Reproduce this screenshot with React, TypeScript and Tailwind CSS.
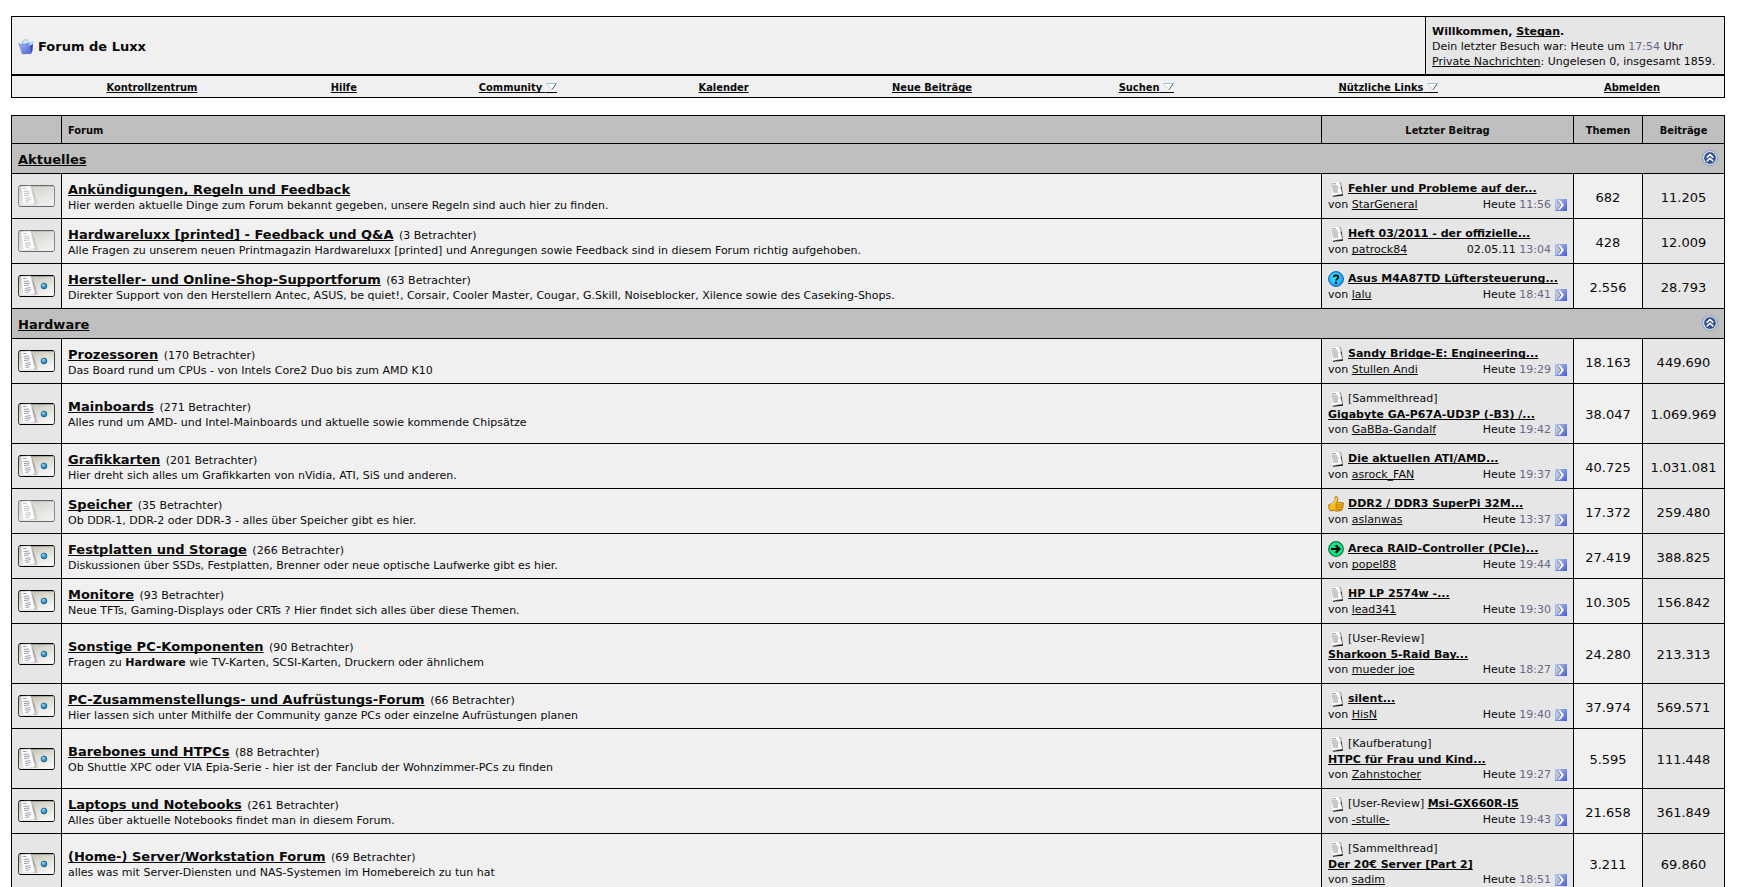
import React from "react";

type IconKind = "page" | "question" | "thumb" | "arrow";
type Forum = {
  title: string;
  viewers?: number;
  desc: React.ReactNode;
  isNew: boolean;
  icon: IconKind;
  prefix?: string;
  prefixInline?: boolean;
  post: string;
  user: string;
  day: string;
  time: string;
  threads: string;
  posts: string;
};
type Category = { name: string; forums: Forum[] };

const categories: Category[] = [
  {
    name: "Aktuelles",
    forums: [
      { title: "Ankündigungen, Regeln und Feedback", desc: "Hier werden aktuelle Dinge zum Forum bekannt gegeben, unsere Regeln sind auch hier zu finden.", isNew: false, icon: "page", post: "Fehler und Probleme auf der...", user: "StarGeneral", day: "Heute", time: "11:56", threads: "682", posts: "11.205" },
      { title: "Hardwareluxx [printed] - Feedback und Q&A", viewers: 3, desc: "Alle Fragen zu unserem neuen Printmagazin Hardwareluxx [printed] und Anregungen sowie Feedback sind in diesem Forum richtig aufgehoben.", isNew: false, icon: "page", post: "Heft 03/2011 - der offizielle...", user: "patrock84", day: "02.05.11", time: "13:04", threads: "428", posts: "12.009" },
      { title: "Hersteller- und Online-Shop-Supportforum", viewers: 63, desc: "Direkter Support von den Herstellern Antec, ASUS, be quiet!, Corsair, Cooler Master, Cougar, G.Skill, Noiseblocker, Xilence sowie des Caseking-Shops.", isNew: true, icon: "question", post: "Asus M4A87TD Lüftersteuerung...", user: "lalu", day: "Heute", time: "18:41", threads: "2.556", posts: "28.793" },
    ],
  },
  {
    name: "Hardware",
    forums: [
      { title: "Prozessoren", viewers: 170, desc: "Das Board rund um CPUs - von Intels Core2 Duo bis zum AMD K10", isNew: true, icon: "page", post: "Sandy Bridge-E: Engineering...", user: "Stullen Andi", day: "Heute", time: "19:29", threads: "18.163", posts: "449.690" },
      { title: "Mainboards", viewers: 271, desc: "Alles rund um AMD- und Intel-Mainboards und aktuelle sowie kommende Chipsätze", isNew: true, icon: "page", prefix: "[Sammelthread]", post: "Gigabyte GA-P67A-UD3P (-B3) /...", user: "GaBBa-Gandalf", day: "Heute", time: "19:42", threads: "38.047", posts: "1.069.969" },
      { title: "Grafikkarten", viewers: 201, desc: "Hier dreht sich alles um Grafikkarten von nVidia, ATI, SiS und anderen.", isNew: true, icon: "page", post: "Die aktuellen ATI/AMD...", user: "asrock_FAN", day: "Heute", time: "19:37", threads: "40.725", posts: "1.031.081" },
      { title: "Speicher", viewers: 35, desc: "Ob DDR-1, DDR-2 oder DDR-3 - alles über Speicher gibt es hier.", isNew: false, icon: "thumb", post: "DDR2 / DDR3 SuperPi 32M...", user: "aslanwas", day: "Heute", time: "13:37", threads: "17.372", posts: "259.480" },
      { title: "Festplatten und Storage", viewers: 266, desc: "Diskussionen über SSDs, Festplatten, Brenner oder neue optische Laufwerke gibt es hier.", isNew: true, icon: "arrow", post: "Areca RAID-Controller (PCIe)...", user: "popel88", day: "Heute", time: "19:44", threads: "27.419", posts: "388.825" },
      { title: "Monitore", viewers: 93, desc: "Neue TFTs, Gaming-Displays oder CRTs ? Hier findet sich alles über diese Themen.", isNew: true, icon: "page", post: "HP LP 2574w -...", user: "lead341", day: "Heute", time: "19:30", threads: "10.305", posts: "156.842" },
      { title: "Sonstige PC-Komponenten", viewers: 90, desc: <>Fragen zu <b>Hardware</b> wie TV-Karten, SCSI-Karten, Druckern oder ähnlichem</>, isNew: true, icon: "page", prefix: "[User-Review]", post: "Sharkoon 5-Raid Bay...", user: "mueder joe", day: "Heute", time: "18:27", threads: "24.280", posts: "213.313" },
      { title: "PC-Zusammenstellungs- und Aufrüstungs-Forum", viewers: 66, desc: "Hier lassen sich unter Mithilfe der Community ganze PCs oder einzelne Aufrüstungen planen", isNew: true, icon: "page", post: "silent...", user: "HisN", day: "Heute", time: "19:40", threads: "37.974", posts: "569.571" },
      { title: "Barebones und HTPCs", viewers: 88, desc: "Ob Shuttle XPC oder VIA Epia-Serie - hier ist der Fanclub der Wohnzimmer-PCs zu finden", isNew: true, icon: "page", prefix: "[Kaufberatung]", post: "HTPC für Frau und Kind...", user: "Zahnstocher", day: "Heute", time: "19:27", threads: "5.595", posts: "111.448" },
      { title: "Laptops und Notebooks", viewers: 261, desc: "Alles über aktuelle Notebooks findet man in diesem Forum.", isNew: true, icon: "page", prefix: "[User-Review]", prefixInline: true, post: "Msi-GX660R-I5", user: "-stulle-", day: "Heute", time: "19:43", threads: "21.658", posts: "361.849" },
      { title: "(Home-) Server/Workstation Forum", viewers: 69, desc: "alles was mit Server-Diensten und NAS-Systemen im Homebereich zu tun hat", isNew: true, icon: "page", prefix: "[Sammelthread]", post: "Der 20€ Server [Part 2]", user: "sadim", day: "Heute", time: "18:51", threads: "3.211", posts: "69.860" },
    ],
  },
];

const navItems = [
  { label: "Kontrollzentrum", menu: false, grow: "grow-[280]" },
  { label: "Hilfe", menu: false, grow: "grow-[104]" },
  { label: "Community", menu: true, grow: "grow-[244]" },
  { label: "Kalender", menu: false, grow: "grow-[168]" },
  { label: "Neue Beiträge", menu: false, grow: "grow-[249]" },
  { label: "Suchen", menu: true, grow: "grow-[180]" },
  { label: "Nützliche Links", menu: true, grow: "grow-[304]" },
  { label: "Abmelden", menu: false, grow: "grow-[184]" },
];

function Gradients() {
  return (
    <svg className="absolute size-0" aria-hidden="true">
      <defs>
        <linearGradient id="card" x1="0" y1="0" x2="0.6" y2="1">
          <stop offset="0" stopColor="#b4b1a8" />
          <stop offset="0.5" stopColor="#dcd9d0" />
          <stop offset="1" stopColor="#f6f5f2" />
        </linearGradient>
        <linearGradient id="fold" x1="0" y1="0" x2="1" y2="0">
          <stop offset="0" stopColor="#6f6d68" />
          <stop offset="1" stopColor="#6f6d68" stopOpacity="0" />
        </linearGradient>
        <linearGradient id="go" x1="0" y1="0" x2="1" y2="1">
          <stop offset="0" stopColor="#b4c6ea" />
          <stop offset="1" stopColor="#4a5cd8" />
        </linearGradient>
        <radialGradient id="cyan" cx="0.4" cy="0.4" r="0.7">
          <stop offset="0" stopColor="#35f0ff" />
          <stop offset="1" stopColor="#1590ff" />
        </radialGradient>
        <radialGradient id="dot" cx="0.4" cy="0.35" r="0.7">
          <stop offset="0" stopColor="#6cc4ec" />
          <stop offset="1" stopColor="#1474ac" />
        </radialGradient>
        <linearGradient id="basket" x1="0" y1="0" x2="1" y2="1">
          <stop offset="0" stopColor="#a3b6f4" />
          <stop offset="1" stopColor="#4c62cc" />
        </linearGradient>
      </defs>
    </svg>
  );
}

function StatusIcon({ isNew }: { isNew: boolean }) {
  return (
    <svg className="block" width="37" height="22" viewBox="0 0 37 22" role="img" aria-label={isNew ? "Neue Beiträge" : "Keine neuen Beiträge"}>
      <g opacity={isNew ? 1 : 0.55}>
        <rect x="0.5" y="0.5" width="36" height="21" rx="2" fill="url(#card)" stroke="#3c3c3c" />
        <path d="M2 .5H35M2 21.5H35" stroke="#000" strokeWidth="1.200" />
        <path d="M2 1.500H35" stroke="#8a8880" opacity=".6" />
        <path d="M14 3l7 17h-5z" fill="url(#fold)" opacity=".7" />
      </g>
      <path d="M3 1.500l9.500-.5 4.500 17.500L5 20.500z" fill="#fcfcfc" stroke="#d4d4d4" strokeWidth=".5" />
      <path d="M5 3.500h3.500M5.500 6.500l5.500-.5M6 8.500l6-.5M6 10.500l5-.5M7 13.500l5.500-1M7 15.500l6-1M7.500 17.500l4-.7" stroke="#84849c" strokeWidth=".8" opacity={isNew ? 1 : 0.6} />
      {isNew && (
        <>
          <circle cx="26" cy="11" r="2.900" fill="url(#dot)" stroke="#1d5f86" strokeWidth=".8" />
          <circle cx="25.300" cy="10" r=".9" fill="#8fdcff" />
        </>
      )}
    </svg>
  );
}

function PostIcon({ kind }: { kind: IconKind }) {
  if (kind === "question")
    return (
      <svg className="size-4 shrink-0" viewBox="0 0 16 16" aria-hidden="true">
        <circle cx="8" cy="8" r="7.400" fill="url(#cyan)" stroke="#1c4f9c" />
        <path d="M5.700 6.300C5.700 3.600 10.300 3.600 10.300 6.300C10.300 8 8 7.800 8 9.600" fill="none" stroke="#000" strokeWidth="1.800" />
        <path d="M7 10.800h2v1.900H7z" />
      </svg>
    );
  if (kind === "arrow")
    return (
      <svg className="size-4 shrink-0" viewBox="0 0 16 16" aria-hidden="true">
        <circle cx="8" cy="8" r="7.300" fill="#16e283" stroke="#107447" strokeWidth="1.200" />
        <path d="M3 8h8M7.700 4.300L11.500 8l-3.800 3.700" fill="none" stroke="#000" strokeWidth="2" />
      </svg>
    );
  if (kind === "thumb")
    return (
      <svg className="size-4 shrink-0" viewBox="0 0 16 16" aria-hidden="true">
        <path d="M.6 9l3-1.500L7 4.500 7.200 1 8.500.5 9.800 2.500 9 6.500l6 .3.600 1.400-.7 1.300.3 1.500-.8 1.200-.2 1.500-1.200.8-5 .8-2-1.200-3.500 1L1 12.800z" fill="#f9bd22" stroke="#a86c06" strokeWidth=".9" />
        <path d="M9 9h5.500M9 11.300h5.300M9 13.400h4.300M8.200 7v6.500" stroke="#a86c06" strokeWidth=".9" fill="none" />
        <path d="M3 8.500L7.700 5.500 8.200 2" stroke="#ffed82" fill="none" />
      </svg>
    );
  return (
    <svg className="size-4 shrink-0" viewBox="0 0 16 16" aria-hidden="true">
      <path d="M3 2l10-1 2 13.800-10 .9z" fill="#1a1a1a" />
      <path d="M2 .8l9.500-.3L12.500 6l1.800 7-10.500 1.700z" fill="#fcfcfc" stroke="#cfcfcf" strokeWidth=".5" />
      <path d="M12.300 1v4.500L13.500 6V1.200z" fill="#f0f0f0" />
      <path d="M3.500 2.800h4.500M3.500 5h6M4 7h6.500M4.500 9h5.500M5 11h5" stroke="#93939c" strokeWidth="1" />
    </svg>
  );
}

function GoIcon() {
  return (
    <svg className="block size-3" viewBox="0 0 12 12" aria-hidden="true">
      <rect width="12" height="12" fill="url(#go)" />
      <path d="M.5 1h3.500L7 6l-3 5H.5z" fill="#c9d2e4" opacity=".7" />
      <path d="M2.500 1.500h2.700L9 6l-3.800 4.500H2.500L6 6z" fill="#fff" />
      <path d="M2.500 1.500L6 6 2.500 10.500" fill="none" stroke="#5c6a96" strokeWidth=".9" />
    </svg>
  );
}

function CollapseIcon() {
  return (
    <svg className="block size-4" viewBox="0 0 16 16" aria-hidden="true">
      <circle cx="8" cy="8" r="7.400" fill="#e6ecf8" stroke="#7f92bd" strokeWidth=".9" />
      <circle cx="8" cy="8" r="5.900" fill="#34528e" />
      <path d="M4.700 7.600L8 4.500l3.300 3.100M4.700 11.400L8 8.300l3.300 3.100" fill="none" stroke="#fff" strokeWidth="1.500" />
    </svg>
  );
}

function MenuArrow() {
  return (
    <svg className="inline-block align-[-2px]" width="11" height="10" viewBox="0 0 11 10" aria-hidden="true">
      <path d="M.5.5h9.700L6 6.500z" fill="#fafcfd" />
      <path d="M.5.500h9.700" stroke="#9ab8ca" strokeWidth=".9" />
      <path d="M.5.500L5.500 6.500" stroke="#bfd2de" strokeWidth=".9" />
      <path d="M10.200.7L6 6.600" stroke="#2f6389" strokeWidth="1" />
      <path d="M0 9.500h11" stroke="#0a0a0a" />
    </svg>
  );
}

function BasketIcon() {
  return (
    <svg className="size-4 shrink-0" viewBox="0 0 16 16" aria-hidden="true">
      <path d="M4.500 6V2.500L7 .7h1.500L10.500 2.500V6" fill="#d4ebff" stroke="#7fb0e0" strokeWidth=".8" />
      <path d="M8 4l7.500-2L15 9l-4 5z" fill="#a9dcfb" />
      <path d="M11.500 7l3.500-2-.5 7-2 3z" fill="#3a4ea8" />
      <path d="M.3 4.500L4 5.500l7.300-1 2.200 10.300L4 15.200z" fill="url(#basket)" />
      <path d="M.3 4.500L4 5.500l7.300-1" fill="none" stroke="#6f86dc" strokeWidth=".8" />
    </svg>
  );
}

function LastPost({ f }: { f: Forum }) {
  const link = <a href="#" className="font-bold underline">{f.post}</a>;
  return (
    <>
      <div className="flex h-4 items-center gap-1 whitespace-nowrap leading-4">
        <PostIcon kind={f.icon} />
        <span>{f.prefix}{f.prefixInline && " "}{(!f.prefix || f.prefixInline) && link}</span>
      </div>
      {f.prefix && !f.prefixInline && <div className="whitespace-nowrap">{link}</div>}
      <div className="flex justify-between whitespace-nowrap">
        <span>von <a href="#" className="underline">{f.user}</a></span>
        <span className="flex items-center gap-1">
          <span>{f.day} <span className="text-[#666686]">{f.time}</span></span>
          <a href="#" aria-label="Zum letzten Beitrag"><GoIcon /></a>
        </span>
      </div>
    </>
  );
}

export default function App() {
  return (
    <div className="min-h-screen bg-white pt-4 pr-[18px] pb-4 pl-[11px] font-['DejaVu_Sans',Verdana,sans-serif] text-[11px] leading-[15px] text-[#0a0a0a] [text-decoration-skip-ink:none]">
      <Gradients />
      <header className="flex border border-black bg-[#f0f0f0]">
        <div className="flex grow items-center gap-1 px-1.5 pt-0.5">
          <BasketIcon />
          <h1 className="text-[13px] font-bold">Forum de Luxx</h1>
        </div>
        <div className="min-w-[299px] border-l border-black bg-[#e6e6e6] px-1.5 pt-[7px] pb-[5px] whitespace-nowrap">
          <p className="font-bold">Willkommen, <a href="#" className="underline">Stegan</a>.</p>
          <p>Dein letzter Besuch war: Heute um <span className="text-[#666686]">17:54</span> Uhr</p>
          <p><a href="#" className="underline">Private Nachrichten</a>: Ungelesen 0, insgesamt 1859.</p>
        </div>
      </header>
      <nav className="border border-black bg-[#f0f0f0] font-['DejaVu_Sans_Condensed','DejaVu_Sans',Tahoma,sans-serif]">
        <ul className="flex pt-1 pb-0.5 font-bold">
          {navItems.map((n) => (
            <li key={n.label} className={`h-[15px] basis-0 text-center whitespace-nowrap ${n.grow}`}>
              <a href="#" className="underline">{n.label}{n.menu && <>{"\u00a0"}<MenuArrow /></>}</a>
            </li>
          ))}
        </ul>
      </nav>

      <table className="mt-[17px] w-full table-fixed border-collapse border border-black [&_td]:border [&_td]:border-black [&_th]:border [&_th]:border-black">
        <colgroup>
          <col className="w-[50px]" />
          <col />
          <col className="w-[252px]" />
          <col className="w-[69px]" />
          <col className="w-[82px]" />
        </colgroup>
        <thead>
          <tr className="h-7 bg-[#bfbfbf] font-['DejaVu_Sans_Condensed','DejaVu_Sans',Tahoma,sans-serif]">
            <th />
            <th className="px-1.5 pt-0.5 text-left">Forum</th>
            <th className="pt-0.5">Letzter Beitrag</th>
            <th className="pt-0.5">Themen</th>
            <th className="pt-0.5">Beiträge</th>
          </tr>
        </thead>
        {categories.map((c) => (
          <tbody key={c.name}>
            <tr className="h-[30px] bg-[#bfbfbf]">
              <td colSpan={5} className="px-1.5">
                <div className="flex justify-between">
                  <a href="#" className="pt-0.5 text-[13px] font-bold underline">{c.name}</a>
                  <button type="button" aria-label={`${c.name} einklappen`} className="self-start"><CollapseIcon /></button>
                </div>
              </td>
            </tr>
            {c.forums.map((f) => (
              <tr key={f.title} className="bg-[#e6e6e6]">
                <td className="px-1.5"><StatusIcon isNew={f.isNew} /></td>
                <td className="bg-[#f0f0f0] px-1.5 pt-0.5">
                  <div>
                    <a href="#" className="text-[13px] font-bold underline">{f.title}</a>
                    {f.viewers && <span className="ml-0.5"> ({f.viewers} Betrachter)</span>}
                  </div>
                  <div>{f.desc}</div>
                </td>
                <td className="px-1.5 pt-[7px] pb-1.5"><LastPost f={f} /></td>
                <td className="bg-[#f0f0f0] pt-0.5 text-center text-[13px]">{f.threads}</td>
                <td className="pt-0.5 text-center text-[13px]">{f.posts}</td>
              </tr>
            ))}
          </tbody>
        ))}
      </table>
    </div>
  );
}
